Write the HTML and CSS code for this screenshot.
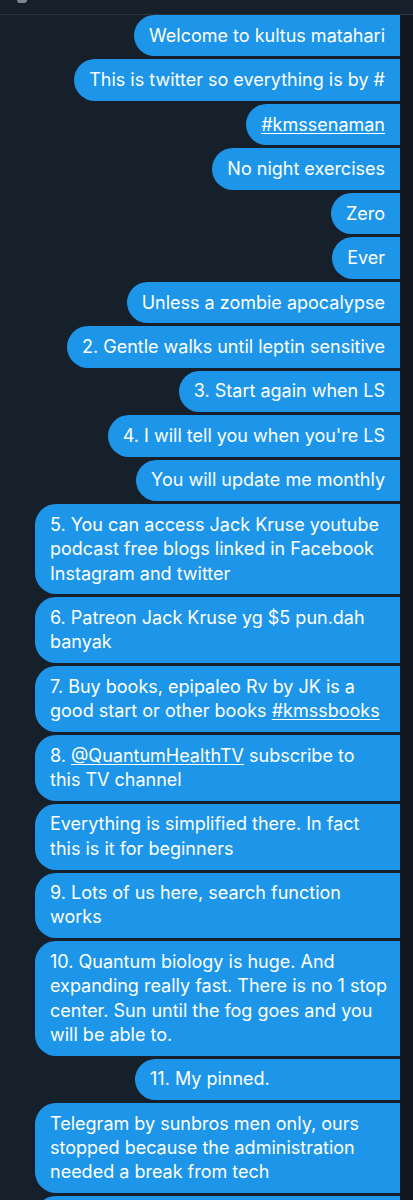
FILE: index.html
```html
<!DOCTYPE html>
<html lang="en">
<head>
<meta charset="utf-8">
<title>Messages</title>
<link rel="stylesheet" href="styles.css">
</head>
<body>
<div class="page">
  <header class="topbar"><span class="avatar-tip"></span></header>
  <div class="thread">
    <div class="msgs">
      <div class="bubble">Welcome to kultus matahari</div>
      <div class="bubble">This is twitter so everything is by #</div>
      <div class="bubble"><a class="link">#kmssenaman</a></div>
      <div class="bubble">No night exercises</div>
      <div class="bubble">Zero</div>
      <div class="bubble">Ever</div>
      <div class="bubble">Unless a zombie apocalypse</div>
      <div class="bubble">2. Gentle walks until leptin sensitive</div>
      <div class="bubble">3. Start again when LS</div>
      <div class="bubble">4. I will tell you when you're LS</div>
      <div class="bubble">You will update me monthly</div>
      <div class="bubble multi">5. You can access Jack Kruse youtube<br>podcast free blogs linked in Facebook<br>Instagram and twitter</div>
      <div class="bubble multi">6. Patreon Jack Kruse yg $5 pun.dah<br>banyak</div>
      <div class="bubble multi">7. Buy books, epipaleo Rv by JK is a<br>good start or other books <a class="link">#kmssbooks</a></div>
      <div class="bubble multi">8. <a class="link">@QuantumHealthTV</a> subscribe to<br>this TV channel</div>
      <div class="bubble multi">Everything is simplified there. In fact<br>this is it for beginners</div>
      <div class="bubble multi">9. Lots of us here, search function<br>works</div>
      <div class="bubble multi">10. Quantum biology is huge. And<br>expanding really fast. There is no 1 stop<br>center. Sun until the fog goes and you<br>will be able to.</div>
      <div class="bubble pinned">11. My pinned.</div>
      <div class="bubble multi">Telegram by sunbros men only, ours<br>stopped because the administration<br>needed a break from tech</div>
      <div class="bubble multi">Telegram by sunbros men only, ours<br>stopped because the administration</div>
    </div>
    <div class="edge"></div>
  </div>
</div>
</body>
</html>
```

FILE: styles.css
```css
html, body {
  margin: 0;
  padding: 0;
  background: #16202a;
}
body {
  font-family: "Inter", "Open Sans", sans-serif;
  color: #ffffff;
  height: 1200px;
  overflow: hidden;
}
.page {
  display: flex;
  flex-direction: column;
}
.topbar {
  height: 15px;
  border-bottom: 1px solid #2c353f;
  box-sizing: border-box;
  position: relative;
  background: #16202a;
}
.avatar-tip {
  position: absolute;
  left: 17px;
  top: 0;
  width: 10px;
  height: 3px;
  border-radius: 0 0 5px 5px;
  background: #7d858d;
}
.thread {
  display: flex;
  flex-direction: row;
}
.msgs {
  flex: 1;
  display: flex;
  flex-direction: column;
  align-items: flex-end;
  gap: 3px;
}
.edge {
  width: 13px;
  background: #11181f;
}
.bubble {
  background: #1d96ea;
  color: #ffffff;
  font-size: 18px;
  line-height: 24.3px;
  padding: 8.6px 15px 8.6px 15px;
  border-radius: 21px 0 0 21px;
  white-space: nowrap;
  box-sizing: border-box;
}
.bubble.multi {
  width: 365px;
}
.bubble.pinned {
  width: 265px;
}
.link {
  color: #ffffff;
  text-decoration: underline;
  text-underline-offset: 2px;
}
```
